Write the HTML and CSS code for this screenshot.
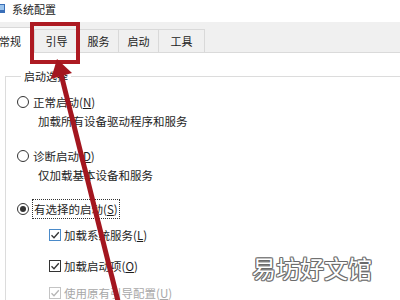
FILE: index.html
```html
<!DOCTYPE html>
<html lang="zh-CN">
<head>
  <meta charset="UTF-8" />
  <title>系统配置</title>
  <link rel="stylesheet" href="styles.css">
</head>
<body>

<div class="window">
  <!-- title bar -->
  <div class="titlebar">
    <svg class="app-icon" width="10" height="9" viewBox="0 0 10 9">
      <rect x="0" y="0" width="10" height="9" fill="#3a6fb8"/>
      <rect x="1" y="1" width="8" height="5" fill="#9cc4ec"/>
    </svg>
    <span class="title">系统配置</span>
  </div>

  <!-- tab strip -->
  <div class="tabs">
    <div class="tab tab-active">常规</div>
    <div class="tab">引导</div>
    <div class="tab">服务</div>
    <div class="tab">启动</div>
    <div class="tab">工具</div>
  </div>

  <!-- tab page -->
  <div class="page">
    <fieldset class="group">
      <legend>启动选择</legend>

      <div class="row opt first">
        <span class="radio"></span>
        <span>正常启动(<u>N</u>)</span>
      </div>
      <div class="row desc">加载所有设备驱动程序和服务</div>

      <div class="row opt second">
        <span class="radio"></span>
        <span>诊断启动(<u>D</u>)</span>
      </div>
      <div class="row desc">仅加载基本设备和服务</div>

      <div class="row opt third">
        <span class="radio checked"></span>
        <span class="focus">有选择的启动(<u>S</u>)</span>
      </div>

      <div class="row check c1">
        <span class="box focused">
          <svg width="12" height="12" viewBox="0 0 12 12"><path d="M2.5 6.2 L5 8.7 L9.8 3.2" fill="none" stroke="#333" stroke-width="1.3"/></svg>
        </span>
        <span>加载系统服务(<u>L</u>)</span>
      </div>
      <div class="row check c2">
        <span class="box">
          <svg width="12" height="12" viewBox="0 0 12 12"><path d="M2.5 6.2 L5 8.7 L9.8 3.2" fill="none" stroke="#333" stroke-width="1.3"/></svg>
        </span>
        <span>加载启动项(<u>O</u>)</span>
      </div>
      <div class="row check c3 disabled">
        <span class="box">
          <svg width="12" height="12" viewBox="0 0 12 12"><path d="M2.5 6.2 L5 8.7 L9.8 3.2" fill="none" stroke="#b5b5b5" stroke-width="1.3"/></svg>
        </span>
        <span>使用原有引导配置(<u>U</u>)</span>
      </div>
    </fieldset>
  </div>
</div>

<!-- annotation drawn over the screenshot -->
<svg class="annotation" width="400" height="300" viewBox="0 0 400 300">
  <rect x="32" y="24" width="46" height="38" fill="none" stroke="#ad1a22" stroke-width="4"/>
  <line x1="119" y1="305" x2="61" y2="74" stroke="#a3161f" stroke-width="5"/>
  <polygon points="57,59 72,73 51,79" fill="#a3161f"/>
</svg>

<div class="watermark">易坊好文馆</div>

</body>
</html>
```

FILE: styles.css
```css
body {
  margin: 0;
  width: 400px;
  height: 300px;
  overflow: hidden;
  position: relative;
  font-family: "Noto Sans CJK SC", "Noto Sans", sans-serif;
  font-size: 11.5px;
  color: #1e1e1e;
  background: #fff;
}
.window {
  width: 400px;
  height: 300px;
  overflow: hidden;
}
.titlebar {
  height: 22px;
  display: flex;
  align-items: center;
  background: #fff;
  padding-bottom: 5px;
  box-sizing: border-box;
}
.app-icon {
  margin-left: -5px;
  margin-right: 7px;
}
.title {
  font-size: 11px;
  color: #222;
}
.tabs {
  height: 31px;
  background: #f0f0f0;
  display: flex;
  align-items: flex-end;
  margin-left: -10px;
  border-bottom: 1px solid #dadada;
  box-sizing: border-box;
}
.tab {
  height: 23px;
  width: 40px;
  display: flex;
  align-items: center;
  justify-content: center;
  border: 1px solid #d9d9d9;
  border-bottom: none;
  border-left: none;
  background: #f0f0f0;
  box-sizing: border-box;
  color: #222;
  font-size: 11px;
}
.tab-active {
  height: 26px;
  width: 41px;
  background: #fff;
  margin-bottom: -1px;
}
.tab:nth-child(2) {
  margin-left: 3px;
  width: 45px;
  border-left: 1px solid #d9d9d9;
}
.tab:nth-child(5) {
  width: 46px;
}
.page {
  background: #fff;
  padding: 16px 0 0 5px;
}
.group {
  margin: 0;
  height: 240px;
  border: 1px solid #dcdcdc;
  border-right: none;
  border-bottom: none;
  padding: 0 0 0 11px;
  box-sizing: border-box;
  min-width: 0;
}
.group legend {
  padding: 0 3px;
  margin-left: 4px;
  line-height: 14px;
  font-size: 11px;
  color: #222;
}
.row {
  display: flex;
  align-items: center;
  height: 16px;
  white-space: nowrap;
}
.row u {
  text-decoration: underline;
  text-underline-offset: 1px;
}
.opt span + span {
  margin-left: 4px;
}
.first { margin-top: 11px; }
.second { margin-top: 19px; }
.third { margin-top: 18px; }
.desc {
  margin-top: 3px;
  padding-left: 21px;
}
.radio {
  width: 12px;
  height: 12px;
  border: 1px solid #333;
  border-radius: 50%;
  box-sizing: border-box;
  display: flex;
  align-items: center;
  justify-content: center;
}
.radio.checked::after {
  content: "";
  width: 6px;
  height: 6px;
  border-radius: 50%;
  background: #333;
}
.focus {
  border: 1px dotted #333;
  padding: 1px 1px;
  margin-left: 3px !important;
}
.check {
  padding-left: 32px;
}
.check span + span {
  margin-left: 3px;
}
.box {
  width: 12px;
  height: 12px;
  border: 1px solid #333;
  box-sizing: border-box;
  display: flex;
  align-items: center;
  justify-content: center;
  background: #fff;
}
.box svg {
  flex: none;
}
.box.focused {
  border-color: #4a8ac9;
}
.c1 { margin-top: 10px; }
.c2 { margin-top: 15px; }
.c3 { margin-top: 11px; }
.disabled {
  color: #a8a8a8;
}
.disabled .box {
  border-color: #c4c4c4;
}
.annotation {
  position: absolute;
  left: 0;
  top: 0;
}
.watermark {
  position: absolute;
  left: 252px;
  top: 253px;
  font-size: 24px;
  line-height: 30px;
  color: #fff;
  text-shadow: 1px 0 #6a6a6a, -1px 0 #6a6a6a, 0 1px #6a6a6a, 0 -1px #6a6a6a,
    1px 1px #8a8a8a, -1px -1px #8a8a8a, 1px -1px #8a8a8a, -1px 1px #8a8a8a;
}
```
